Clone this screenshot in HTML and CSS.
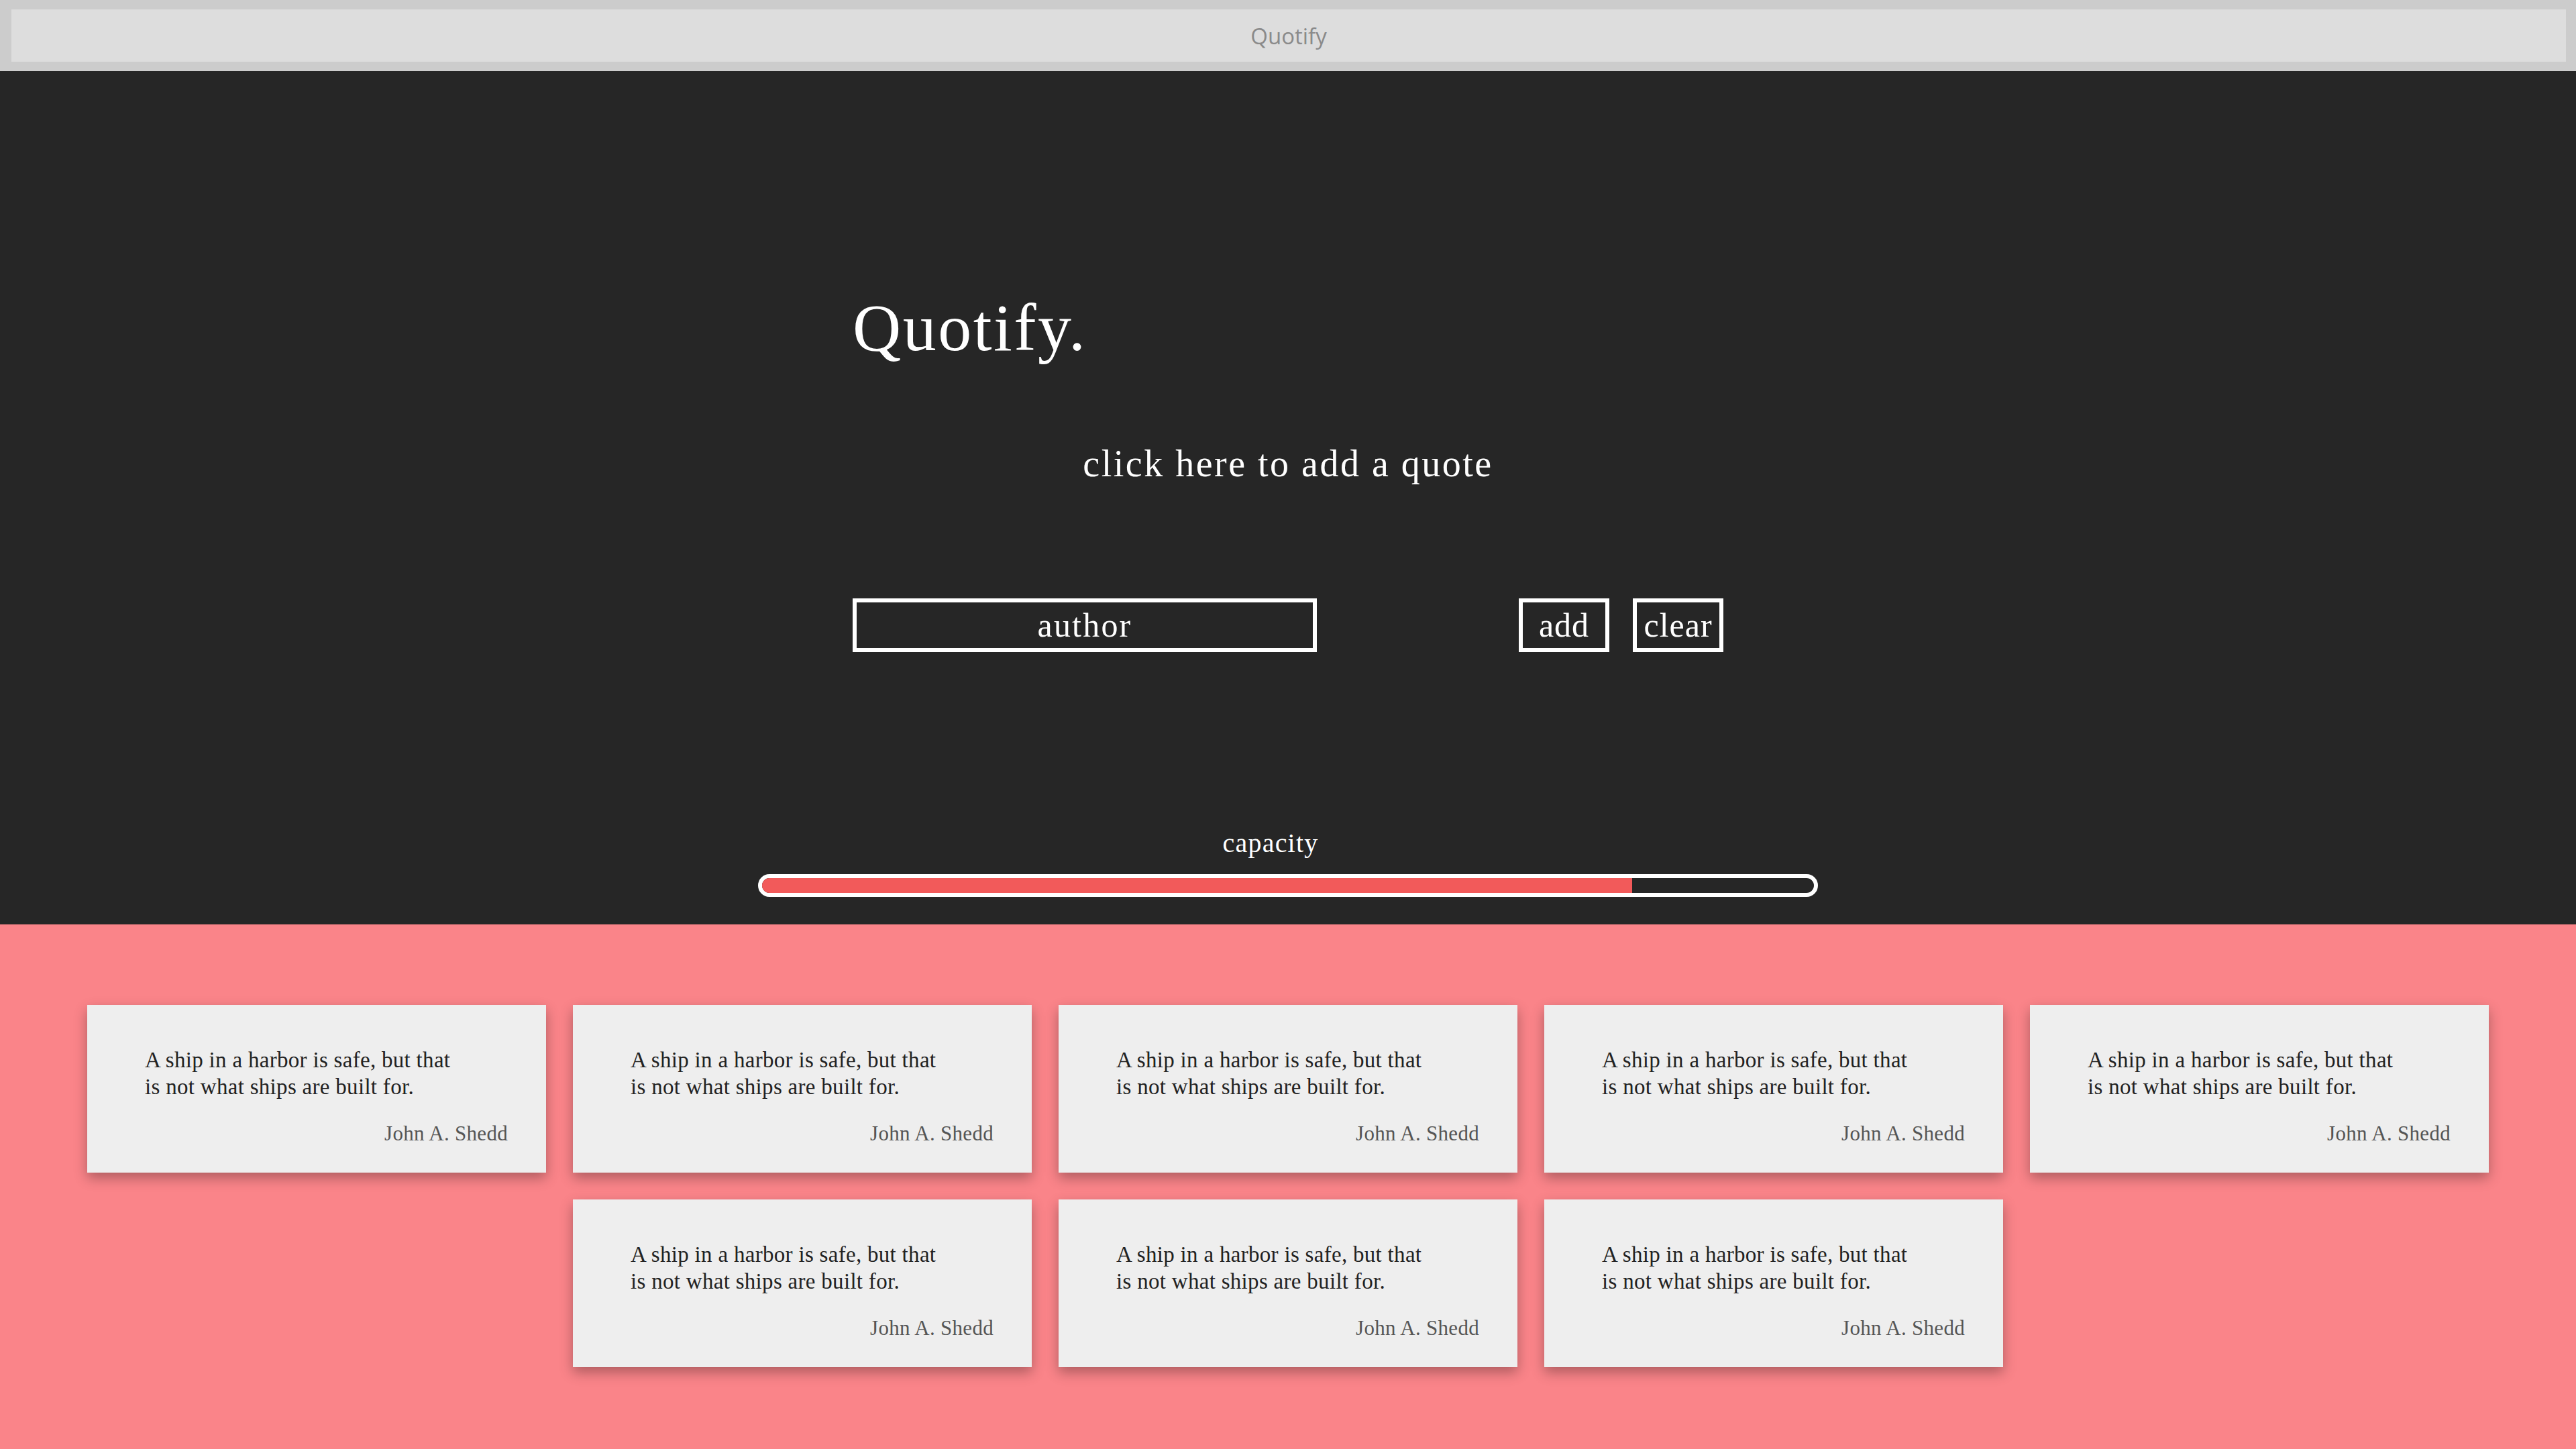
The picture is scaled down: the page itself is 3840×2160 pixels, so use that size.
FILE: index.html
```html
<!DOCTYPE html>
<html lang="en">
<head>
<meta charset="utf-8">
<title>Quotify</title>
<link rel="stylesheet" href="styles.css">
</head>
<body>
<header class="titlebar">
  <div class="titlebar-inner">Quotify</div>
</header>
<section class="hero">
  <div class="hero-inner">
    <h1 class="brand">Quotify.</h1>
    <p class="prompt">click here to add a quote</p>
    <div class="controls">
      <input class="author-input" type="text" placeholder="author">
      <div class="buttons">
        <button class="btn">add</button>
        <button class="btn">clear</button>
      </div>
    </div>
  </div>
  <div class="capacity">
    <div class="capacity-label">capacity</div>
    <div class="capacity-track"><div class="capacity-fill" style="width: 82.7%"></div></div>
  </div>
</section>
<main class="board">
  <div class="grid">
    <article class="card"><p class="quote">A ship in a harbor is safe, but that is not what ships are built for.</p><p class="author">John A. Shedd</p></article>
    <article class="card"><p class="quote">A ship in a harbor is safe, but that is not what ships are built for.</p><p class="author">John A. Shedd</p></article>
    <article class="card"><p class="quote">A ship in a harbor is safe, but that is not what ships are built for.</p><p class="author">John A. Shedd</p></article>
    <article class="card"><p class="quote">A ship in a harbor is safe, but that is not what ships are built for.</p><p class="author">John A. Shedd</p></article>
    <article class="card"><p class="quote">A ship in a harbor is safe, but that is not what ships are built for.</p><p class="author">John A. Shedd</p></article>
    <article class="card"><p class="quote">A ship in a harbor is safe, but that is not what ships are built for.</p><p class="author">John A. Shedd</p></article>
    <article class="card"><p class="quote">A ship in a harbor is safe, but that is not what ships are built for.</p><p class="author">John A. Shedd</p></article>
    <article class="card"><p class="quote">A ship in a harbor is safe, but that is not what ships are built for.</p><p class="author">John A. Shedd</p></article>
  </div>
</main>
</body>
</html>
```
FILE: styles.css
```css
* { box-sizing: border-box; }
html, body { margin: 0; padding: 0; }
body {
  width: 3840px;
  height: 2160px;
  overflow: hidden;
  background: #fa8489;
  font-family: "Liberation Serif", "Times New Roman", serif;
}

.titlebar {
  background: #cccccc;
  padding: 14px 15px 14px 17px;
}
.titlebar-inner {
  height: 78px;
  background: #dddddd;
  display: flex;
  align-items: center;
  justify-content: center;
  font-family: "Open Sans", "Noto Sans", sans-serif;
  font-size: 33px;
  color: #8a8a8a;
}

.hero {
  background: #262626;
  height: 1272px;
  padding-top: 333px;
  color: #ffffff;
}
.hero-inner {
  width: 1298px;
  margin: 0 auto;
}
.brand {
  margin: 0;
  font-weight: normal;
  font-size: 100px;
  letter-spacing: 2.5px;
  line-height: 100px;
  height: 100px;
}
.prompt {
  margin: 117px 0 0;
  text-align: center;
  font-size: 56px;
  letter-spacing: 2.5px;
  line-height: 70px;
}
.controls {
  margin-top: 166px;
  display: flex;
  justify-content: space-between;
  align-items: center;
}
.author-input {
  width: 692px;
  height: 80px;
  border: 6px solid #ffffff;
  background: #262626;
  color: #ffffff;
  text-align: center;
  font-family: "Liberation Serif", "Times New Roman", serif;
  font-size: 50px;
  letter-spacing: 2.2px;
  padding: 0;
  outline: none;
}
.author-input::placeholder { color: #ffffff; opacity: 1; }
.buttons {
  display: flex;
  gap: 35px;
}
.btn {
  width: 135px;
  height: 80px;
  border: 6px solid #ffffff;
  background: #262626;
  color: #ffffff;
  font-family: "Liberation Serif", "Times New Roman", serif;
  font-size: 50px;
  letter-spacing: 1px;
  padding: 0;
  line-height: 1;
}

.capacity {
  margin-top: 261px;
  display: flex;
  flex-direction: column;
  align-items: center;
}
.capacity-label {
  font-size: 40px;
  letter-spacing: 1.2px;
  line-height: 48px;
  margin-right: 52px;
}
.capacity-track {
  margin-top: 22px;
  width: 1580px;
  height: 34px;
  border: 6px solid #ffffff;
  border-radius: 17px;
  overflow: hidden;
  background: #262626;
}
.capacity-fill {
  height: 100%;
  background: #f25a5a;
}

.board {
  padding-top: 120px;
}
.grid {
  width: 3580px;
  margin: 0 auto;
  display: flex;
  flex-wrap: wrap;
  justify-content: center;
  gap: 40px;
}
.card {
  width: 684px;
  height: 250px;
  background: #eeeeee;
  box-shadow: 0 8px 18px rgba(0, 0, 0, 0.3);
  padding: 62px 57px 0 86px;
}
.quote {
  margin: 0;
  max-width: 475px;
  font-size: 33px;
  letter-spacing: 0.3px;
  line-height: 40px;
  color: #222222;
}
.author {
  margin: 30px 0 0;
  text-align: right;
  font-size: 31px;
  letter-spacing: 0.3px;
  line-height: 40px;
  color: #555555;
}
```
